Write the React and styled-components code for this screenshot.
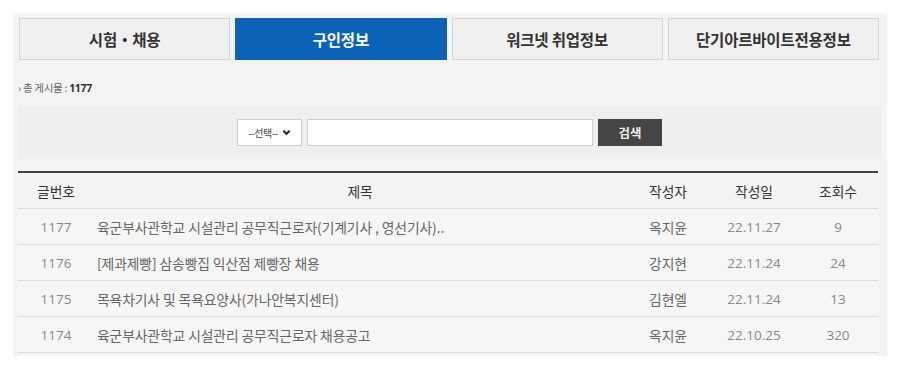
import React from "react";
import styled, { createGlobalStyle } from "styled-components";

const Global = createGlobalStyle`
  html, body { margin: 0; padding: 0; background: #fff; }
  body { font-family: "Noto Sans CJK KR", "Noto Sans", sans-serif; }
  * { box-sizing: border-box; }
`;

const Page = styled.div`
  padding: 13px 14px 0 13px;
  width: 901px;
`;

const Panel = styled.div`
  background: #f4f4f4;
  padding: 5px;
  height: 343px;
`;

const Tabs = styled.div`
  display: grid;
  grid-template-columns: repeat(4, 1fr);
  column-gap: 5px;
  padding: 0 3px 0 1px;
`;

const Tab = styled.div`
  height: 42px;
  display: flex;
  align-items: center;
  justify-content: center;
  font-size: 15.5px;
  font-weight: bold;
  letter-spacing: -0.2px;
  color: ${(p) => (p.$active ? "#fff" : "#333")};
  background: ${(p) => (p.$active ? "#0b62b7" : "#f0f0f0")};
  border: 1px solid ${(p) => (p.$active ? "#0b62b7" : "#d4d4d4")};
`;

const Count = styled.div`
  font-size: 10.5px;
  color: #666;
  margin: 21px 0 0 0;
  height: 14px;
  line-height: 14px;
  letter-spacing: -0.3px;
  b { color: #333; font-weight: bold; font-family: "Open Sans", sans-serif; }
`;

const SearchBar = styled.div`
  margin: 11px 0 0 0;
  height: 53px;
  background: #efefef;
  display: flex;
  align-items: center;
  justify-content: center;
  gap: 5px;
  padding-left: 3px;
  padding-right: 4px;
`;

const SelectBox = styled.div`
  width: 65px;
  height: 27px;
  background: #fff;
  border: 1px solid #cfcfcf;
  display: flex;
  align-items: center;
  justify-content: center;
  gap: 4px;
  font-size: 10px;
  color: #444;
  letter-spacing: -0.5px;
`;

const Input = styled.div`
  width: 286px;
  height: 27px;
  background: #fff;
  border: 1px solid #cfcfcf;
`;

const SearchBtn = styled.div`
  width: 64px;
  height: 27px;
  background: #454545;
  color: #eee;
  font-size: 12.5px;
  font-weight: bold;
  display: flex;
  align-items: center;
  justify-content: center;
`;

const Table = styled.div`
  margin-top: 12px;
  border-top: 2px solid #444;
  margin-right: 4px;
`;

const Row = styled.div`
  display: grid;
  grid-template-columns: 76px 532px 84px 88px 1fr;
  height: 36px;
  align-items: center;
  border-bottom: 1px solid #dcdcdc;
  background: ${(p) => (p.$head ? "#f3f3f3" : "#f6f6f6")};
  font-size: 13.8px;
  color: ${(p) => (p.$head ? "#333" : "#666")};
`;

const Cell = styled.div`
  text-align: ${(p) => (p.$left ? "left" : "center")};
  white-space: nowrap;
  overflow: hidden;
  letter-spacing: ${(p) => (p.$num ? "0" : "-0.1px")};
  font-family: ${(p) =>
    p.$num ? '"Open Sans", "Noto Sans CJK KR", sans-serif' : '"Noto Sans CJK KR", sans-serif'};
  font-size: ${(p) => (p.$num ? "13.5px" : "inherit")};
  color: ${(p) => (p.$num ? "#888" : "inherit")};
  padding-left: ${(p) => (p.$left ? "3px" : "0")};
`;

const rows = [
  ["1177", "육군부사관학교 시설관리 공무직근로자(기계기사 , 영선기사)..", "옥지윤", "22.11.27", "9"],
  ["1176", "[제과제빵] 삼송빵집 익산점 제빵장 채용", "강지현", "22.11.24", "24"],
  ["1175", "목욕차기사 및 목욕요양사(가나안복지센터)", "김현엘", "22.11.24", "13"],
  ["1174", "육군부사관학교 시설관리 공무직근로자 채용공고", "옥지윤", "22.10.25", "320"],
];

const Chevron = () => (
  <svg width="9" height="7" viewBox="0 0 10 7">
    <path d="M1.5 1.5 L5 5 L8.5 1.5" fill="none" stroke="#222" strokeWidth="2.2" />
  </svg>
);

export default function App() {
  return (
    <Page>
      <Global />
      <Panel>
        <Tabs>
          <Tab>시험・채용</Tab>
          <Tab $active>구인정보</Tab>
          <Tab>워크넷 취업정보</Tab>
          <Tab>단기아르바이트전용정보</Tab>
        </Tabs>
        <Count>
          › 총 게시물 : <b>1177</b>
        </Count>
        <SearchBar>
          <SelectBox>
            <span>--선택--</span>
            <Chevron />
          </SelectBox>
          <Input />
          <SearchBtn>검색</SearchBtn>
        </SearchBar>
        <Table>
          <Row $head>
            <Cell>글번호</Cell>
            <Cell>제목</Cell>
            <Cell>작성자</Cell>
            <Cell>작성일</Cell>
            <Cell>조회수</Cell>
          </Row>
          {rows.map((r) => (
            <Row key={r[0]}>
              <Cell $num>{r[0]}</Cell>
              <Cell $left>{r[1]}</Cell>
              <Cell>{r[2]}</Cell>
              <Cell $num>{r[3]}</Cell>
              <Cell $num>{r[4]}</Cell>
            </Row>
          ))}
        </Table>
      </Panel>
    </Page>
  );
}
